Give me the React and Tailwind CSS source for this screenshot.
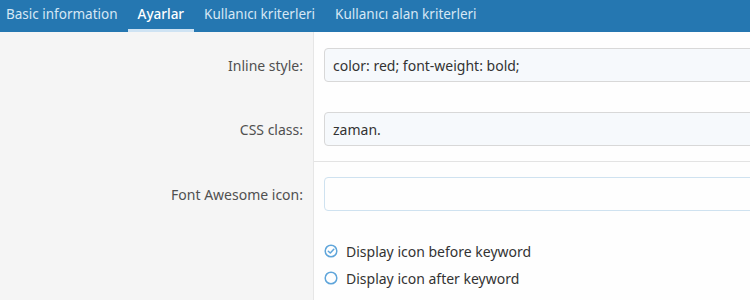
import React from 'react';

const tabs = ['Basic information', 'Ayarlar', 'Kullanıcı kriterleri', 'Kullanıcı alan kriterleri'];

const RadioIcon = ({ checked }) => (
  <svg width="14" height="14" viewBox="0 0 14 14" className="shrink-0">
    <circle cx="7" cy="7" r="5.8" fill="none" stroke="#5fa5da" strokeWidth="1.5" />
    {checked && <path d="M4.3 7.2 L6.3 9 L9.8 5.2" fill="none" stroke="#5fa5da" strokeWidth="1.5" strokeLinecap="round" strokeLinejoin="round" />}
  </svg>
);

const Field = ({ value }) => (
  <div className="h-[34px] -mr-2 flex items-center px-2 border border-[#d8d8d8] rounded-[4px] bg-[#f6f9fc] text-[14px] text-[#333]">
    {value}
  </div>
);

const App = () => {
  return (
    <div className="w-[750px] h-[300px] overflow-hidden bg-[#fefefe]" style={{ fontFamily: '"Noto Sans", "Open Sans", sans-serif' }}>
      <div className="h-8 bg-[#2577b1] flex">
        {tabs.map((t, i) => (
          <div
            key={t}
            className={`px-[10px] flex items-center text-[13.5px] border-b-[3px] ${i === 1 ? 'text-white border-[#cfe3f3] font-medium' : 'text-[#d6e7f5] border-transparent'} ${i === 0 ? 'pl-[6px]' : ''}`}
          >
            {t}
          </div>
        ))}
      </div>

      <div className="flex">
        <div className="w-[314px] shrink-0 bg-[#f5f5f5] border-r border-[#e6e6e6] pt-4 pb-[15px] pr-[10px] flex items-center justify-end h-[65px] text-[14px] text-[#505050]">
          Inline style:
        </div>
        <div className="flex-1 min-w-0 pt-4 pb-[15px] pl-[10px]">
          <Field value="color: red; font-weight: bold;" />
        </div>
      </div>

      <div className="flex">
        <div className="w-[314px] shrink-0 bg-[#f5f5f5] border-r border-[#e6e6e6] pr-[10px] flex items-center justify-end h-[64px] pt-[15px] pb-[15px] text-[14px] text-[#505050]">
          CSS class:
        </div>
        <div className="flex-1 min-w-0 pt-[15px] pb-[15px] pl-[10px]">
          <Field value="zaman." />
        </div>
      </div>

      <div className="flex">
        <div className="w-[314px] shrink-0 bg-[#f5f5f5] border-r border-[#e6e6e6] pr-[10px] pt-[16px] h-[139px] text-[14px] text-[#505050] flex justify-end">
          <div className="h-[34px] flex items-center">Font Awesome icon:</div>
        </div>
        <div className="flex-1 min-w-0 border-t border-[#e3e3e3] pt-[15px] pl-[10px]">
          <div className="h-[34px] -mr-2 border border-[#cfe2f0] rounded-[4px] bg-[#fefefe]" />
          <div className="mt-[30px] flex flex-col gap-[7px] text-[14px] text-[#333]">
            <label className="flex items-center gap-[8px] h-[20px]">
              <RadioIcon checked />
              Display icon before keyword
            </label>
            <label className="flex items-center gap-[8px] h-[20px]">
              <RadioIcon />
              Display icon after keyword
            </label>
          </div>
        </div>
      </div>
    </div>
  );
};

export default App;
